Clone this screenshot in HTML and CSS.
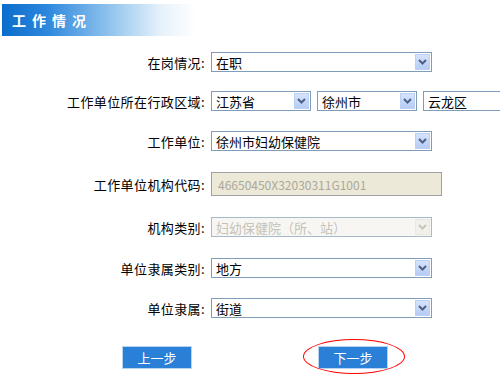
FILE: index.html
```html
<!DOCTYPE html>
<html lang="zh-CN">
    <head>
        <meta charset="UTF-8">
        <title>工作情况</title>
        <link rel="stylesheet" href="styles.css">
    </head>
    <body>
        <div class="banner">
            <h2 class="banner-title">工作情况</h2>
        </div>

        <form class="work-form">
            <div class="row">
                <label class="label">在岗情况:</label>
                <div class="combo w-long">
                    <select class="field"><option>在职</option></select>
                    <span class="arrow"><svg width="9" height="6" viewBox="0 0 9 6"><path d="M1 1 L4.5 4.5 L8 1" fill="none" stroke="#4d6185" stroke-width="2"/></svg></span>
                </div>
            </div>

            <div class="row row-sm">
                <label class="label">工作单位所在行政区域:</label>
                <div class="combo w-short">
                    <select class="field"><option>江苏省</option></select>
                    <span class="arrow"><svg width="9" height="6" viewBox="0 0 9 6"><path d="M1 1 L4.5 4.5 L8 1" fill="none" stroke="#4d6185" stroke-width="2"/></svg></span>
                </div>
                <div class="combo w-short">
                    <select class="field"><option>徐州市</option></select>
                    <span class="arrow"><svg width="9" height="6" viewBox="0 0 9 6"><path d="M1 1 L4.5 4.5 L8 1" fill="none" stroke="#4d6185" stroke-width="2"/></svg></span>
                </div>
                <input class="field text w-short" type="text" value="云龙区">
            </div>

            <div class="row row-md">
                <label class="label">工作单位:</label>
                <div class="combo w-long">
                    <select class="field"><option>徐州市妇幼保健院</option></select>
                    <span class="arrow"><svg width="9" height="6" viewBox="0 0 9 6"><path d="M1 1 L4.5 4.5 L8 1" fill="none" stroke="#4d6185" stroke-width="2"/></svg></span>
                </div>
            </div>

            <div class="row row-lg">
                <label class="label">工作单位机构代码:</label>
                <input class="field code" type="text" value="46650450X32030311G1001" disabled>
            </div>

            <div class="row row-md">
                <label class="label">机构类别:</label>
                <div class="combo w-long disabled">
                    <select class="field" disabled><option>妇幼保健院（所、站）</option></select>
                    <span class="arrow"><svg width="9" height="6" viewBox="0 0 9 6"><path d="M1 1 L4.5 4.5 L8 1" fill="none" stroke="#c9c7ba" stroke-width="2"/></svg></span>
                </div>
            </div>

            <div class="row">
                <label class="label">单位隶属类别:</label>
                <div class="combo w-long">
                    <select class="field"><option>地方</option></select>
                    <span class="arrow"><svg width="9" height="6" viewBox="0 0 9 6"><path d="M1 1 L4.5 4.5 L8 1" fill="none" stroke="#4d6185" stroke-width="2"/></svg></span>
                </div>
            </div>

            <div class="row">
                <label class="label">单位隶属:</label>
                <div class="combo w-long">
                    <select class="field"><option>街道</option></select>
                    <span class="arrow"><svg width="9" height="6" viewBox="0 0 9 6"><path d="M1 1 L4.5 4.5 L8 1" fill="none" stroke="#4d6185" stroke-width="2"/></svg></span>
                </div>
            </div>

            <div class="actions">
                <button type="button" class="btn">上一步</button>
                <span class="marked"><button type="submit" class="btn">下一步</button></span>
            </div>
        </form>
    </body>
</html>
```

FILE: styles.css
```css
/* 工作情况 */
body {
    margin: 0;
    width: 500px;
    height: 385px;
    overflow: hidden;
    background: #fff;
    font-family: "Noto Sans CJK SC", "Liberation Sans", sans-serif;
    font-size: 13px;
    color: #000;
}
.banner {
    margin: 4px 0 0 2px;
    width: 198px;
    height: 32px;
    display: flex;
    align-items: center;
    background: linear-gradient(to right, #0a6dcc 0%, #2b86dc 22%, #9ccaef 58%, #e6f1fb 80%, #ffffff 98%);
}
.banner-title {
    margin: 0 0 0 10px;
    font-size: 14px;
    font-weight: bold;
    color: #fff;
    letter-spacing: 6px;
}
.work-form {
    margin-top: 6px;
    overflow: hidden;
}
.row {
    display: flex;
    align-items: center;
    gap: 6px;
    height: 40px;
    white-space: nowrap;
}
.row-sm {
    height: 38px;
}
.row-md {
    height: 42px;
}
.row-lg {
    height: 44px;
}
.label {
    width: 205px;
    flex: none;
    text-align: right;
    letter-spacing: 0.4px;
}
.combo {
    position: relative;
    flex: none;
    height: 20px;
}
.w-long {
    width: 221px;
}
.w-short {
    width: 100px;
}
.field {
    box-sizing: border-box;
    width: 100%;
    height: 100%;
    margin: 0;
    padding: 0 0 0 4px;
    border: 1px solid #7f9db9;
    background: #fff;
    font-family: inherit;
    font-size: 13px;
    color: #000;
    appearance: none;
    -webkit-appearance: none;
    outline: none;
}
.text {
    height: 20px;
    flex: none;
}
.code {
    width: 231px;
    height: 24px;
    flex: none;
    border: 1px solid #a0a0a0;
    background: #ece9d8;
    color: #aca899;
    padding-left: 6px;
    font-size: 12px;
}
.arrow {
    position: absolute;
    top: 2px;
    right: 2px;
    width: 15px;
    height: 16px;
    box-sizing: border-box;
    display: flex;
    align-items: center;
    justify-content: center;
    border: 1px solid #bcd0f4;
    background: linear-gradient(#d6e3fb, #b6ccf6);
    pointer-events: none;
}
.disabled .field {
    background: #f4f3ee;
    color: #aca899;
}
.disabled .arrow {
    border-color: #e8e7e0;
    background: #f1f0ea;
}
.actions {
    display: flex;
    align-items: center;
    gap: 126px;
    padding: 18px 0 8px 122px;
}
.btn {
    box-sizing: border-box;
    width: 70px;
    height: 23px;
    margin: 0;
    padding: 0;
    border: 1px solid #b8d2f4;
    background: #2a80d6;
    color: #fff;
    font-family: inherit;
    font-size: 13px;
}
.marked {
    position: relative;
    display: inline-flex;
}
.marked::after {
    content: "";
    position: absolute;
    left: -15px;
    right: -17px;
    top: -7px;
    bottom: -5px;
    border: 1px solid #ff0000;
    border-radius: 50%;
}
```
